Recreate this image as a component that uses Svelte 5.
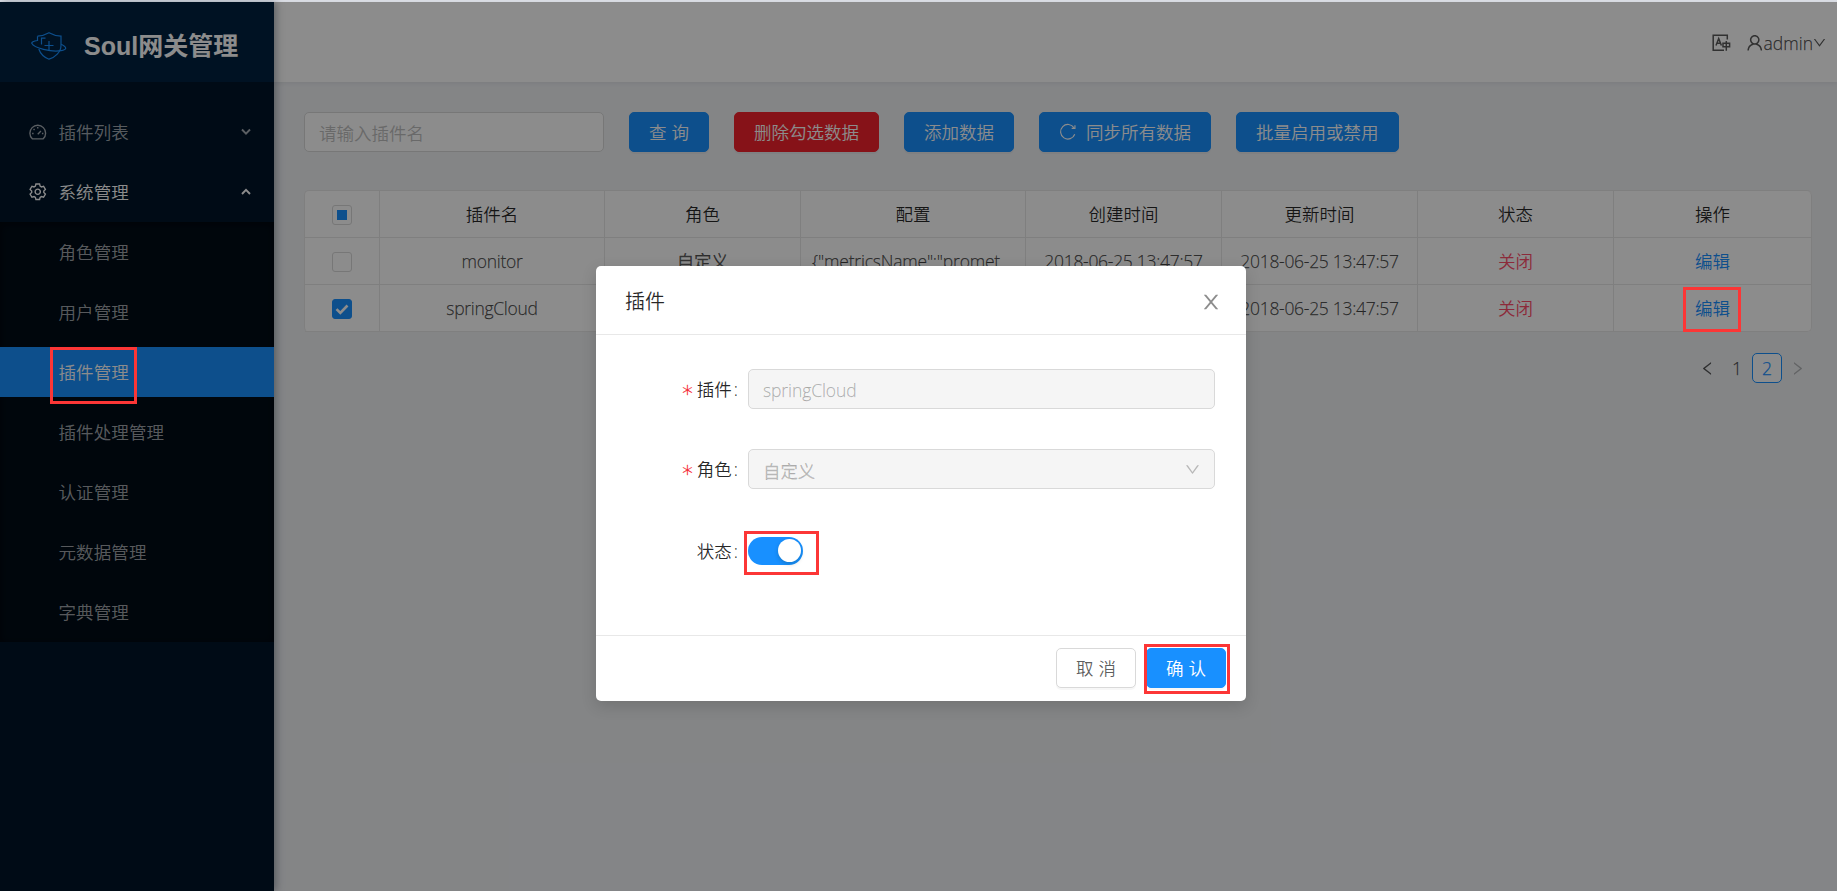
<script lang="ts">
	const icons = {
		close:
			'M563.8 512l262.5-312.9c4.4-5.2.7-13.1-6.1-13.1h-79.8c-4.7 0-9.2 2.1-12.3 5.7L511.6 449.8 295.1 191.7c-3-3.6-7.5-5.7-12.3-5.7H203c-6.8 0-10.5 7.9-6.1 13.1L459.4 512 196.9 824.9A7.95 7.95 0 0 0 203 838h79.8c4.7 0 9.2-2.1 12.3-5.7l216.5-258.1 216.5 258.1c3 3.6 7.5 5.7 12.3 5.7h79.8c6.8 0 10.5-7.9 6.1-13.1L563.8 512z',
		down: 'M884 256h-75c-5.1 0-9.9 2.5-12.9 6.6L512 654.2 227.9 262.6c-3-4.1-7.8-6.6-12.9-6.6h-75c-6.5 0-10.3 7.4-6.5 12.7l352.6 486.1c12.8 17.6 39 17.6 51.7 0l352.6-486.1c3.9-5.3.1-12.7-6.4-12.7z',
		left: 'M724 218.3V141c0-6.7-7.7-10.4-12.9-6.3L260.3 486.8a31.86 31.86 0 0 0 0 50.3l450.8 352.1c5.3 4.1 12.9.4 12.9-6.3v-77.3c0-4.9-2.3-9.6-6.1-12.6l-360-281 360-281.1c3.8-3 6.1-7.7 6.1-12.6z',
		right:
			'M765.7 486.8L314.9 134.7A7.97 7.97 0 0 0 302 141v77.3c0 4.9 2.3 9.6 6.1 12.6l360 281.1-360 281.1c-3.9 3-6.1 7.7-6.1 12.6V883c0 6.7 7.7 10.4 12.9 6.3l450.8-352.1a31.96 31.96 0 0 0 0-50.4z',
		user: 'M858.5 763.6a374 374 0 0 0-80.6-119.5 375.63 375.63 0 0 0-119.5-80.6c-.4-.2-.8-.3-1.2-.5C719.5 518 760 444.7 760 362c0-137-111-248-248-248S264 225 264 362c0 82.7 40.5 156 102.8 201.1-.4.2-.8.3-1.2.5-44.8 18.9-85 46-119.5 80.6a375.63 375.63 0 0 0-80.6 119.5A371.7 371.7 0 0 0 136 901.8a8 8 0 0 0 8 8.2h60c4.4 0 7.9-3.5 8-7.8 2-77.2 33-149.5 87.8-204.3 56.7-56.7 132-87.9 212.2-87.9s155.5 31.2 212.2 87.9C779 752.7 810 825 812 902.2c.1 4.4 3.6 7.8 8 7.8h60a8 8 0 0 0 8-8.2c-1-47.8-10.9-94.3-29.5-138.2zM512 534c-45.9 0-89.1-17.9-121.6-50.4S340 407.9 340 362c0-45.9 17.9-89.1 50.4-121.6S466.1 190 512 190s89.1 17.9 121.6 50.4S684 316.1 684 362c0 45.9-17.9 89.1-50.4 121.6S557.9 534 512 534z'
	};

	const systemMenu = [
		'角色管理',
		'用户管理',
		'插件管理',
		'插件处理管理',
		'认证管理',
		'元数据管理',
		'字典管理'
	];
	let current = $state('插件管理');

	const columns = ['插件名', '角色', '配置', '创建时间', '更新时间', '状态', '操作'];

	let rows = $state([
		{
			name: 'monitor',
			role: '自定义',
			config: '{"metricsName":"prometheus"}',
			created: '2018-06-25 13:47:57',
			updated: '2018-06-25 13:47:57',
			checked: false
		},
		{
			name: 'springCloud',
			role: '自定义',
			config: '',
			created: '2018-06-25 13:47:57',
			updated: '2018-06-25 13:47:57',
			checked: true
		}
	]);

	const someChecked = $derived(rows.some((r) => r.checked));
	let enabled = $state(true);
</script>

{#snippet icon(d: string)}
	<svg class="icon" viewBox="64 64 896 896" aria-hidden="true"><path {d} /></svg>
{/snippet}

<div class="topline"></div>
<div class="app">
	<aside>
		<div class="logo">
			<svg width="36" height="28" viewBox="0 0 36 28" aria-hidden="true">
				<path d="M6.5 4.2C11 4 15 2.5 18 .8c3 1.700 7 3.200 12 3.400v9.300C30 20 24 25.500 18 27.200 13.500 25.500 9.500 22 7.800 17" />
				<path d="M6.500 4.200v4.300C2.500 9 .2 10.200.9 11.600 3 16 20 20.300 30 18.700c6-1 6.500-3.200.2-6.400" />
				<path d="M10.500 12.500V6.200h4M18 9v9M13.500 13.500h9" />
			</svg>
			<h1>Soul网关管理</h1>
		</div>
		<nav>
			<button class="item">
				<svg class="line" viewBox="0 0 18 18" aria-hidden="true">
					<path d="M3.400 16.300A8.100 8.100 0 1 1 14.600 16.300Z" />
					<path d="M9 11.500 12.300 8.200M9 4.200v1.500M4.700 6.200l1 1M3.200 10.800h1.500M13.300 10.800h1.500" />
				</svg>
				<span>插件列表</span>
				<svg class="arrow" viewBox="0 0 10 8" aria-hidden="true"><path d="M1 1.500 5 5.700 9 1.500" /></svg>
			</button>
			<button class="item open">
				<svg class="line" viewBox="-9 -9 18 18" aria-hidden="true">
					<path d="M-2.400-5.800-1.900-8H1.900L2.400-5.800 3.820-4.980 5.980-5.650 7.880-2.350 6.220-.82V.82L7.880 2.350 5.980 5.650 3.820 4.980 2.400 5.800 1.900 8H-1.900L-2.400 5.800-3.820 4.980-5.980 5.650-7.880 2.350-6.220.82V-.82L-7.880-2.350-5.980-5.650-3.820-4.980Z" />
					<circle r="2.700" />
				</svg>
				<span>系统管理</span>
				<svg class="arrow" viewBox="0 0 10 8" aria-hidden="true"><path d="M1 6 5 1.800 9 6" /></svg>
			</button>
			<div class="sub">
				{#each systemMenu as name (name)}
					<button class="item" class:selected={name === current} onclick={() => (current = name)}>
						<span>{name}</span>
					</button>
				{/each}
			</div>
		</nav>
	</aside>

	<div class="main">
		<header>
			<svg class="lang" viewBox="0 0 19 18" aria-hidden="true">
				<path d="M15.300 5.500V1.200H1.200V16.300H12" />
				<path d="M4 11.500 6.700 4.500 9.400 11.500M5 9.200h3.400M11 9.200h6.600v3.500H11ZM14.300 7v9.700" />
			</svg>
			<span class="user">{@render icon(icons.user)}admin{@render icon(icons.down)}</span>
		</header>

		<section>
			<div class="toolbar">
				<input type="text" placeholder="请输入插件名" />
				<button class="btn primary two">查询</button>
				<button class="btn danger">删除勾选数据</button>
				<button class="btn primary">添加数据</button>
				<button class="btn primary">
					<svg class="line reload" viewBox="0 0 18 18" aria-hidden="true">
						<path d="M15.500 5A7.500 7.500 0 1 0 16.200 11.500" />
						<path d="M16.400 2.300V5.600H13" />
					</svg>
					同步所有数据
				</button>
				<button class="btn primary">批量启用或禁用</button>
			</div>

			<table>
				<colgroup>
					<col class="c-check" /><col class="c-wide" /><col class="c-mid" /><col class="c-wide" />
					<col class="c-mid" /><col class="c-mid" /><col class="c-mid" /><col />
				</colgroup>
				<thead>
					<tr>
						<th><i class="check" class:some={someChecked}></i></th>
						{#each columns as col (col)}
							<th>{col}</th>
						{/each}
					</tr>
				</thead>
				<tbody>
					{#each rows as row (row.name)}
						<tr>
							<td>
								<i class="check" class:on={row.checked}>
									{#if row.checked}
										<svg viewBox="0 0 14 11" aria-hidden="true"><path d="M1.500 5.200 5.300 9 12.500 1.500" /></svg>
									{/if}
								</i>
							</td>
							<td>{row.name}</td>
							<td>{row.role}</td>
							<td class="config">{row.config}</td>
							<td>{row.created}</td>
							<td>{row.updated}</td>
							<td class="off">关闭</td>
							<td class="edit"><span>编辑</span></td>
						</tr>
					{/each}
				</tbody>
			</table>

			<div class="pager">
				<span>{@render icon(icons.left)}</span>
				<span>1</span>
				<span class="active">2</span>
				<span class="disabled">{@render icon(icons.right)}</span>
			</div>
		</section>
	</div>

	<div class="mask">
		<div class="modal" role="dialog" aria-modal="true">
			<div class="modal-head">
				<h2>插件</h2>
				{@render icon(icons.close)}
			</div>
			<div class="modal-body">
				<div class="field">
					<span class="label required">插件</span>
					<div class="control">springCloud</div>
				</div>
				<div class="field">
					<span class="label required">角色</span>
					<div class="control">自定义 {@render icon(icons.down)}</div>
				</div>
				<div class="field">
					<span class="label">状态</span>
					<button
						class="switch"
						class:enabled
						role="switch"
						aria-checked={enabled}
						aria-label="状态"
						onclick={() => (enabled = !enabled)}
					></button>
				</div>
			</div>
			<div class="modal-foot">
				<button class="btn two">取消</button>
				<button class="btn primary two">确认</button>
			</div>
		</div>
	</div>

	<div class="mark mark-menu"></div>
	<div class="mark mark-edit"></div>
	<div class="mark mark-switch"></div>
	<div class="mark mark-ok"></div>
</div>

<style>
	:global(body) {
		overflow: hidden;
		font-family: 'Open Sans', 'Noto Sans CJK SC', sans-serif;
		font-size: 17.5px;
		font-weight: 350;
		color: rgba(0, 0, 0, 0.65);
	}

	* {
		box-sizing: border-box;
	}

	button,
	input {
		font: inherit;
	}

	button {
		border: 0;
		background: none;
	}

	.topline {
		height: 2px;
		background: #dcdfe6;
	}

	.app {
		position: relative;
		display: flex;
		height: 889px;
		background: #f0f2f5;
	}

	.icon {
		width: 17.5px;
		height: 17.5px;
		fill: currentColor;
	}

	.line {
		width: 17.5px;
		height: 17.5px;
		fill: none;
		stroke: currentColor;
		stroke-width: 1.4;
	}

	.reload {
		margin-top: 2px;
		stroke-width: 1.2;
	}

	aside {
		z-index: 1;
		flex: none;
		width: 274px;
		background: #001529;
		box-shadow: 2px 0 8px rgba(0, 21, 41, 0.35);
	}

	.logo {
		display: flex;
		align-items: center;
		gap: 17px;
		height: 80px;
		padding: 7px 0 0 31px;
		background: #002140;
	}

	.logo svg {
		fill: none;
		stroke: #1890ff;
		stroke-width: 1.2;
	}

	.logo h1 {
		margin: 0;
		font: 700 25px/30px 'Liberation Sans', 'Noto Sans CJK SC', sans-serif;
		color: #fff;
	}

	nav {
		display: flex;
		flex-direction: column;
		padding-top: 20px;
	}

	.item {
		display: flex;
		align-items: center;
		gap: 12px;
		width: 100%;
		height: 50px;
		margin: 5px 0;
		padding: 0 23px 0 29px;
		color: rgba(255, 255, 255, 0.65);
		text-align: left;
	}

	.item span {
		flex: 1;
		padding-bottom: 1px;
		letter-spacing: 0.1px;
	}

	.item.open,
	.item.selected {
		color: #fff;
	}

	.arrow {
		width: 10px;
		height: 8px;
		fill: none;
		stroke: currentColor;
		stroke-width: 1.9;
	}

	.sub {
		display: flex;
		flex-direction: column;
		background: #000c17;
		box-shadow: 0 2px 10px rgba(0, 0, 0, 0.45) inset;
	}

	.sub .item {
		padding-left: 58.5px;
	}

	.sub .selected {
		background: #1890ff;
	}

	.main {
		flex: 1;
		min-width: 0;
	}

	header {
		display: flex;
		align-items: center;
		justify-content: flex-end;
		gap: 15px;
		height: 80px;
		padding: 1px 11px 0 0;
		background: #fff;
		box-shadow: 0 1px 5px rgba(0, 21, 41, 0.08);
	}

	.lang {
		width: 19px;
		height: 18px;
		fill: none;
		stroke: currentColor;
		stroke-width: 1.5;
	}

	.user {
		display: flex;
		align-items: center;
	}

	.user .icon:last-child {
		width: 13px;
	}

	section {
		padding: 30px 25px 0 30px;
	}

	.toolbar {
		display: flex;
		gap: 25px;
	}

	.toolbar input {
		width: 300px;
		height: 40px;
		padding: 2px 14px 0;
		border: 1px solid #d9d9d9;
		border-radius: 5px;
		background: #fff;
	}

	.toolbar input::placeholder {
		color: #bfbfbf;
	}

	.btn {
		display: flex;
		align-items: center;
		justify-content: center;
		gap: 9.5px;
		height: 40px;
		padding: 0 19px 2px;
		border: 1px solid #d9d9d9;
		border-radius: 5px;
		background: #fff;
		color: rgba(0, 0, 0, 0.65);
		white-space: nowrap;
		box-shadow: 0 2px 0 rgba(0, 0, 0, 0.03);
	}

	.btn.primary {
		border-color: #1890ff;
		background: #1890ff;
		color: #fff;
	}

	.btn.danger {
		border-color: #f5222d;
		background: #f5222d;
		color: #fff;
	}

	.btn.two {
		width: 80px;
		padding-right: 14px;
		letter-spacing: 5px;
	}

	table {
		width: 1508px;
		margin-top: 38px;
		table-layout: fixed;
		border-collapse: separate;
		border-spacing: 0;
		border: 1px solid #e8e8e8;
		border-width: 1px 0 0 1px;
		border-radius: 5px;
		background: #fff;
	}

	.c-check {
		width: 75px;
	}

	.c-wide {
		width: 225px;
	}

	.c-mid {
		width: 196px;
	}

	th,
	td {
		height: 47px;
		padding: 0 11px;
		border: 1px solid #e8e8e8;
		border-width: 0 1px 1px 0;
		font-weight: inherit;
		line-height: 26px;
		text-align: center;
		white-space: nowrap;
		letter-spacing: -0.3px;
	}

	th {
		color: rgba(0, 0, 0, 0.85);
		letter-spacing: 0;
	}

	/* the light Latin face is thinner than the Chinese one beside it */
	td,
	.user,
	.pager,
	.control {
		-webkit-text-stroke: 0.25px currentColor;
	}

	th:last-child {
		border-top-right-radius: 5px;
	}

	tr:last-child td:last-child {
		border-bottom-right-radius: 5px;
	}

	.config {
		overflow: hidden;
		text-overflow: ellipsis;
		letter-spacing: -0.2px;
	}

	.off {
		color: #ff4d6a;
	}

	.edit {
		color: #1890ff;
	}

	.off,
	.edit {
		letter-spacing: 0;
		-webkit-text-stroke: 0;
	}

	.check {
		display: flex;
		align-items: center;
		justify-content: center;
		width: 20px;
		height: 20px;
		margin: 2px auto 0;
		border: 1px solid #d9d9d9;
		border-radius: 3px;
		background: #fff;
	}

	.check.some::after {
		content: '';
		width: 10px;
		height: 10px;
		background: #1890ff;
	}

	.check.on {
		border-color: #1890ff;
		background: #1890ff;
	}

	.check svg {
		width: 14px;
		height: 11px;
		fill: none;
		stroke: #fff;
		stroke-width: 2.6;
	}

	.pager {
		display: flex;
		justify-content: flex-end;
		margin-top: 21px;
	}

	.pager span {
		display: flex;
		align-items: center;
		justify-content: center;
		width: 30px;
		height: 30px;
	}

	.pager .icon {
		width: 15px;
		height: 15px;
	}

	.pager .active {
		border: 1px solid #1890ff;
		border-radius: 5px;
		background: #fff;
		color: #1890ff;
	}

	.pager .disabled {
		color: rgba(0, 0, 0, 0.25);
	}

	.mask {
		position: absolute;
		inset: 0;
		z-index: 2;
		padding-top: 264px;
		background: rgba(0, 0, 0, 0.45);
	}

	.modal {
		width: 650px;
		margin: 0 auto 0 596px;
		border-radius: 5px;
		background: #fff;
		box-shadow: 0 5px 15px rgba(0, 0, 0, 0.15);
	}

	.modal-head {
		display: flex;
		align-items: center;
		justify-content: space-between;
		height: 69px;
		padding: 0 25px 0 29px;
		border-bottom: 1px solid #e8e8e8;
	}

	.modal-head h2 {
		margin: 0;
		font-size: 20px;
		font-weight: inherit;
		color: rgba(0, 0, 0, 0.85);
	}

	.modal-head .icon {
		width: 20px;
		height: 20px;
		margin-top: 4px;
		color: rgba(0, 0, 0, 0.45);
	}

	.modal-body {
		display: flex;
		flex-direction: column;
		gap: 40px;
		height: 300px;
		padding: 34px 31px 0 30px;
	}

	.field {
		display: flex;
		align-items: center;
		height: 40px;
	}

	.field:last-child {
		height: 43px;
	}

	.label {
		width: 122px;
		padding: 2px 10px 0 0;
		color: rgba(0, 0, 0, 0.85);
		text-align: right;
		white-space: nowrap;
	}

	.field:last-child .label {
		padding-top: 0;
	}

	.label::after {
		content: ':';
		margin-left: 2px;
	}

	.required::before {
		content: '*';
		margin-right: 4px;
		font-family: 'DejaVu Sans', sans-serif;
		font-size: 21px;
		color: #f5222d;
		/* the glyph sits high in its line */
		vertical-align: -5px;
		line-height: 1;
		-webkit-text-stroke: 0.3px currentColor;
	}

	.control {
		display: flex;
		flex: 1;
		align-items: center;
		justify-content: space-between;
		height: 40px;
		padding: 2px 14px 0;
		border: 1px solid #d9d9d9;
		border-radius: 5px;
		background: #f5f5f5;
		color: rgba(0, 0, 0, 0.25);
		letter-spacing: -0.1px;
	}

	.control .icon {
		width: 15px;
		height: 15px;
		margin-top: -2px;
	}

	.switch {
		display: flex;
		align-items: center;
		width: 55px;
		height: 28px;
		padding: 0 2px;
		border-radius: 14px;
		background: rgba(0, 0, 0, 0.25);
	}

	.switch::after {
		content: '';
		width: 23px;
		height: 23px;
		border-radius: 50%;
		background: #fff;
		box-shadow: 0 2px 4px rgba(0, 35, 11, 0.2);
	}

	.switch.enabled {
		justify-content: flex-end;
		background: #1890ff;
	}

	.modal-foot {
		display: flex;
		justify-content: flex-end;
		gap: 10px;
		height: 66px;
		padding: 12px 20px 0 0;
		border-top: 1px solid #e8e8e8;
	}

	/* highlight frames lying over the page */
	.mark {
		position: absolute;
		z-index: 3;
		border: 3px solid #fc3636;
		pointer-events: none;
	}

	.mark-menu {
		left: 50px;
		top: 345px;
		width: 87px;
		height: 57px;
	}

	.mark-edit {
		left: 1683px;
		top: 285px;
		width: 58px;
		height: 45px;
	}

	.mark-switch {
		left: 744px;
		top: 529px;
		width: 75px;
		height: 44px;
	}

	.mark-ok {
		left: 1144px;
		top: 642px;
		width: 86px;
		height: 50px;
	}
</style>
